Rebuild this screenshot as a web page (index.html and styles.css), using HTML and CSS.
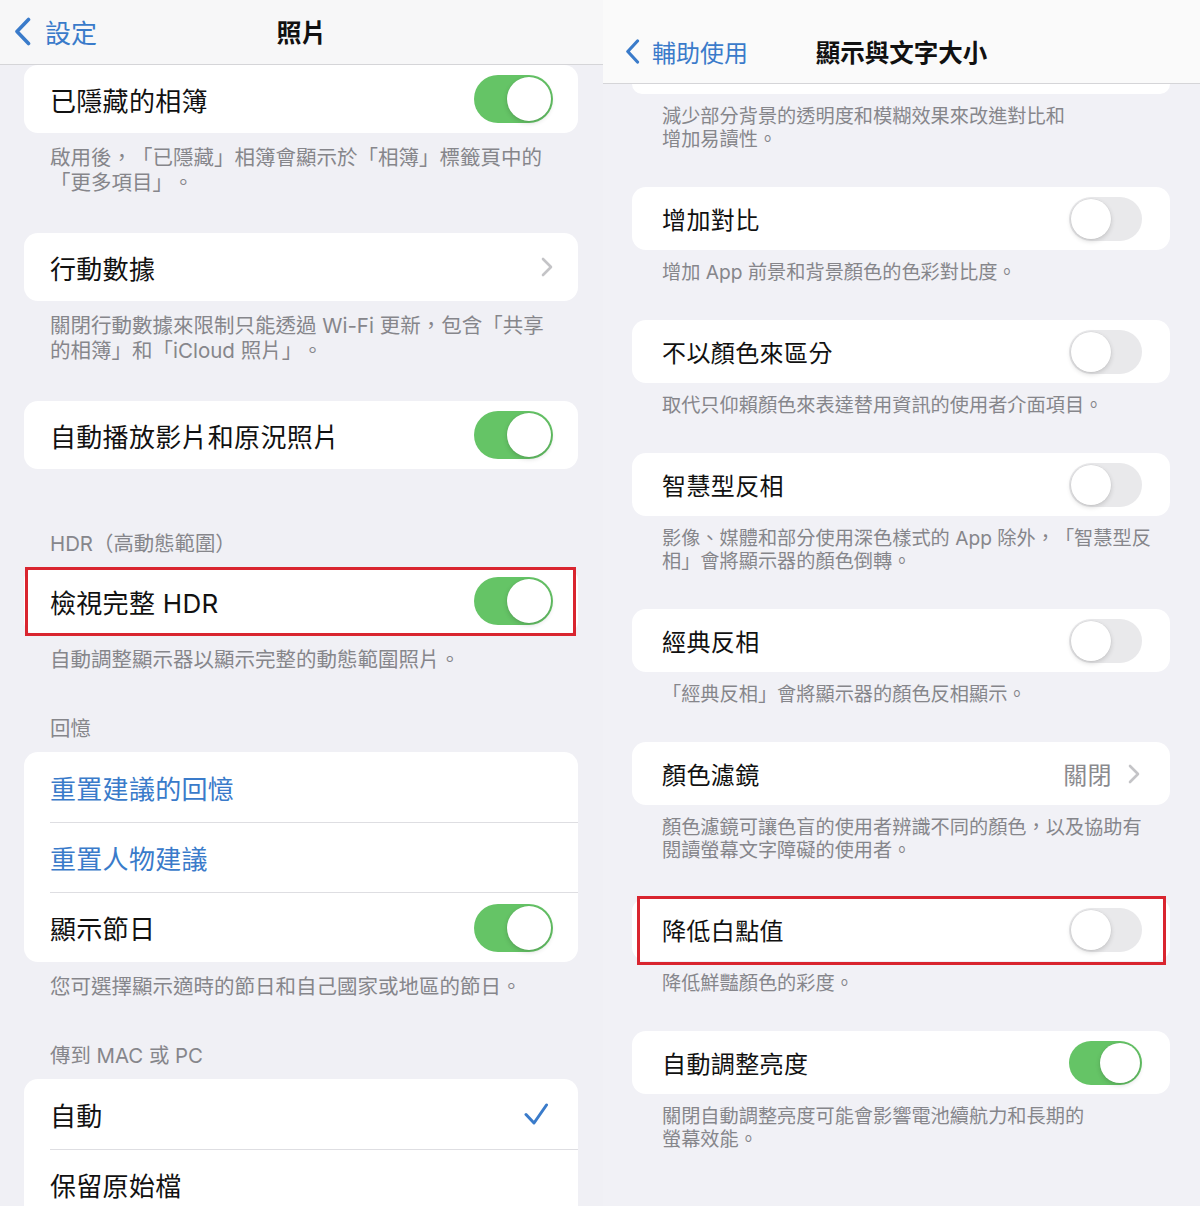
FILE: index.html
```html
<!DOCTYPE html>
<html lang="zh-Hant">
<head>
  <meta charset="UTF-8" />
  <meta name="viewport" content="width=device-width, initial-scale=1.0"/>
  <title>照片 / 顯示與文字大小</title>
  <link rel="stylesheet" href="styles.css">
</head>
<body>
<div class="screens">

  <!-- Left: 照片 settings -->
  <section class="screen photos">
    <header class="navbar">
      <a class="back">
        <svg width="17" height="29" viewBox="0 0 17 29"><path d="M14.5 2.5L3 14.5l11.5 12" fill="none" stroke="#3a7bca" stroke-width="3.6" stroke-linecap="round" stroke-linejoin="round"/></svg>
        設定
      </a>
      <h1>照片</h1>
      <span></span>
    </header>

    <div class="group">
      <div class="card">
        <div class="row"><span>已隱藏的相簿</span><span class="switch on"></span></div>
      </div>
      <p class="foot">啟用後，「已隱藏」相簿會顯示於「相簿」標籤頁中的<br>「更多項目」。</p>
    </div>

    <div class="group">
      <div class="card">
        <div class="row"><span>行動數據</span>
          <svg class="chev" width="12" height="20" viewBox="0 0 12 20"><path d="M2 2l8 8-8 8" fill="none" stroke="#c4c4c7" stroke-width="2.6" stroke-linecap="round" stroke-linejoin="round"/></svg>
        </div>
      </div>
      <p class="foot">關閉行動數據來限制只能透過 Wi-Fi 更新，包含「共享<br>的相簿」和「iCloud 照片」。</p>
    </div>

    <div class="group">
      <div class="card">
        <div class="row"><span>自動播放影片和原況照片</span><span class="switch on"></span></div>
      </div>
    </div>

    <div class="group spaced">
      <h2 class="head">HDR（高動態範圍）</h2>
      <div class="card marked">
        <div class="row"><span>檢視完整 HDR</span><span class="switch on"></span></div>
      </div>
      <p class="foot">自動調整顯示器以顯示完整的動態範圍照片。</p>
    </div>

    <div class="group titled">
      <h2 class="head">回憶</h2>
      <div class="card list">
        <div class="row link">重置建議的回憶</div>
        <div class="row link">重置人物建議</div>
        <div class="row"><span>顯示節日</span><span class="switch on"></span></div>
      </div>
      <p class="foot">您可選擇顯示適時的節日和自己國家或地區的節日。</p>
    </div>

    <div class="group titled">
      <h2 class="head">傳到 MAC 或 PC</h2>
      <div class="card list">
        <div class="row"><span>自動</span>
          <svg class="check" width="24" height="22" viewBox="0 0 24 22"><path d="M2 11.5l8 8.5L22.5 2" fill="none" stroke="#3a7bca" stroke-width="3" stroke-linecap="round" stroke-linejoin="round"/></svg>
        </div>
        <div class="row"><span>保留原始檔</span></div>
      </div>
    </div>
  </section>

  <!-- Right: 顯示與文字大小 -->
  <section class="screen display">
    <header class="navbar">
      <a class="back">
        <svg width="15" height="25" viewBox="0 0 15 25"><path d="M12.5 2L2.8 12.5l9.7 10.5" fill="none" stroke="#3a7bca" stroke-width="3.2" stroke-linecap="round" stroke-linejoin="round"/></svg>
        輔助使用
      </a>
      <h1>顯示與文字大小</h1>
      <span></span>
    </header>

    <div class="group">
      <div class="card peek"></div>
      <p class="foot">減少部分背景的透明度和模糊效果來改進對比和<br>增加易讀性。</p>
    </div>

    <div class="group">
      <div class="card">
        <div class="row"><span>增加對比</span><span class="switch"></span></div>
      </div>
      <p class="foot">增加 App 前景和背景顏色的色彩對比度。</p>
    </div>

    <div class="group">
      <div class="card">
        <div class="row"><span>不以顏色來區分</span><span class="switch"></span></div>
      </div>
      <p class="foot">取代只仰賴顏色來表達替用資訊的使用者介面項目。</p>
    </div>

    <div class="group">
      <div class="card">
        <div class="row"><span>智慧型反相</span><span class="switch"></span></div>
      </div>
      <p class="foot">影像、媒體和部分使用深色樣式的 App 除外，「智慧型反<br>相」會將顯示器的顏色倒轉。</p>
    </div>

    <div class="group">
      <div class="card">
        <div class="row"><span>經典反相</span><span class="switch"></span></div>
      </div>
      <p class="foot">「經典反相」會將顯示器的顏色反相顯示。</p>
    </div>

    <div class="group">
      <div class="card">
        <div class="row"><span>顏色濾鏡</span>
          <span class="detail">關閉
            <svg width="12" height="20" viewBox="0 0 12 20"><path d="M2 2l8 8-8 8" fill="none" stroke="#c4c4c7" stroke-width="2.6" stroke-linecap="round" stroke-linejoin="round"/></svg>
          </span>
        </div>
      </div>
      <p class="foot">顏色濾鏡可讓色盲的使用者辨識不同的顏色，以及協助有<br>閱讀螢幕文字障礙的使用者。</p>
    </div>

    <div class="group">
      <div class="card marked">
        <div class="row"><span>降低白點值</span><span class="switch"></span></div>
      </div>
      <p class="foot">降低鮮豔顏色的彩度。</p>
    </div>

    <div class="group">
      <div class="card">
        <div class="row"><span>自動調整亮度</span><span class="switch on"></span></div>
      </div>
      <p class="foot">關閉自動調整亮度可能會影響電池續航力和長期的<br>螢幕效能。</p>
    </div>
  </section>

</div>
</body>
</html>
```

FILE: styles.css
```css
* { box-sizing:border-box; }
body {
  margin:0; font-family:Inter,"Noto Sans CJK TC",sans-serif; color:#111; background:#f0f0f5;
  text-spacing-trim:space-all;
}
.screens { display:flex; height:1206px; overflow:hidden; }
.screen { height:1206px; overflow:hidden; background:#f0f0f5; }
.photos { width:603px; }
.display { width:597px; background:#f1f1f6; }

/* nav bar */
.navbar {
  display:grid; grid-template-columns:1fr auto 1fr; align-items:center;
  background:#f7f7f8; border-bottom:1px solid #d5d5d8;
}
.navbar h1 { margin:0; font-weight:700; }
.back { display:flex; align-items:center; color:#3a7bca; }
.photos .navbar { height:65px; padding:0 14px 2px 14px; }
.photos .navbar h1 { font-size:25px; }
.photos .back { gap:14px; font-size:26px; }
.display .navbar { height:84px; padding:20px 22px 0 22px; background:#fafafa; }
.display .navbar h1 { font-size:24.5px; }
.display .back { gap:12px; font-size:24px; }

/* groups */
.group { margin-top:38px; }
.group:first-of-type { margin-top:0; }
.group.titled { margin-top:44px; }
.group.spaced { margin-top:62px; }
.head {
  margin:0; padding:0 50px 11px; font-size:20.4px; line-height:25px;
  font-weight:400; color:#86868b;
}
.foot {
  margin:0; padding:12px 50px 0; font-size:20.5px; line-height:25px;
  color:#86868b; white-space:nowrap;
}

/* cards and rows */
.card { position:relative; background:#fff; border-radius:14px; margin:0 25px 0 24px; }
.row {
  display:flex; align-items:center; justify-content:space-between;
  height:68px; margin-left:26px; padding-right:25px; font-size:26px; letter-spacing:0.3px;
}
.list .row { height:70px; }
.row + .row { border-top:1px solid #dedee2; }
.row.link { color:#3a7bca; }
.check { margin-right:5px; }

.card.marked::after {
  content:""; position:absolute; top:0; left:1px; right:2px; bottom:-1px;
  border:3px solid #d9252f;
}

/* toggles */
.switch {
  position:relative; flex:none; width:79px; height:48px; border-radius:24px; background:#e9e9eb;
}
.switch::after {
  content:""; position:absolute; top:2px; left:2px; width:44px; height:44px; border-radius:50%;
  background:#fff; box-shadow:0 2px 5px rgba(0,0,0,0.16), 0 0 0 0.5px rgba(0,0,0,0.05);
}
.switch.on { background:#65c466; }
.switch.on::after { left:auto; right:2px; }

/* right screen sizes */
.display .group { margin-top:36px; }
.display .group:first-of-type { margin-top:0; }
.display .card { margin:0 30px 0 29px; }
.display .card.peek { height:10px; border-radius:0 0 14px 14px; }
.display .row { height:63px; margin-left:30px; padding-right:28px; font-size:24px; letter-spacing:0.4px; }
.display .foot { padding:11px 40px 0 59px; font-size:19.2px; line-height:23px; }
.display .switch { width:73px; height:44px; border-radius:22px; }
.display .switch::after { width:40px; height:40px; }
.display .card.marked::after { top:-2px; left:5px; right:4px; bottom:-4px; }
.detail { display:flex; align-items:center; gap:16px; color:#8a8a8e; margin-right:2px; }
```
